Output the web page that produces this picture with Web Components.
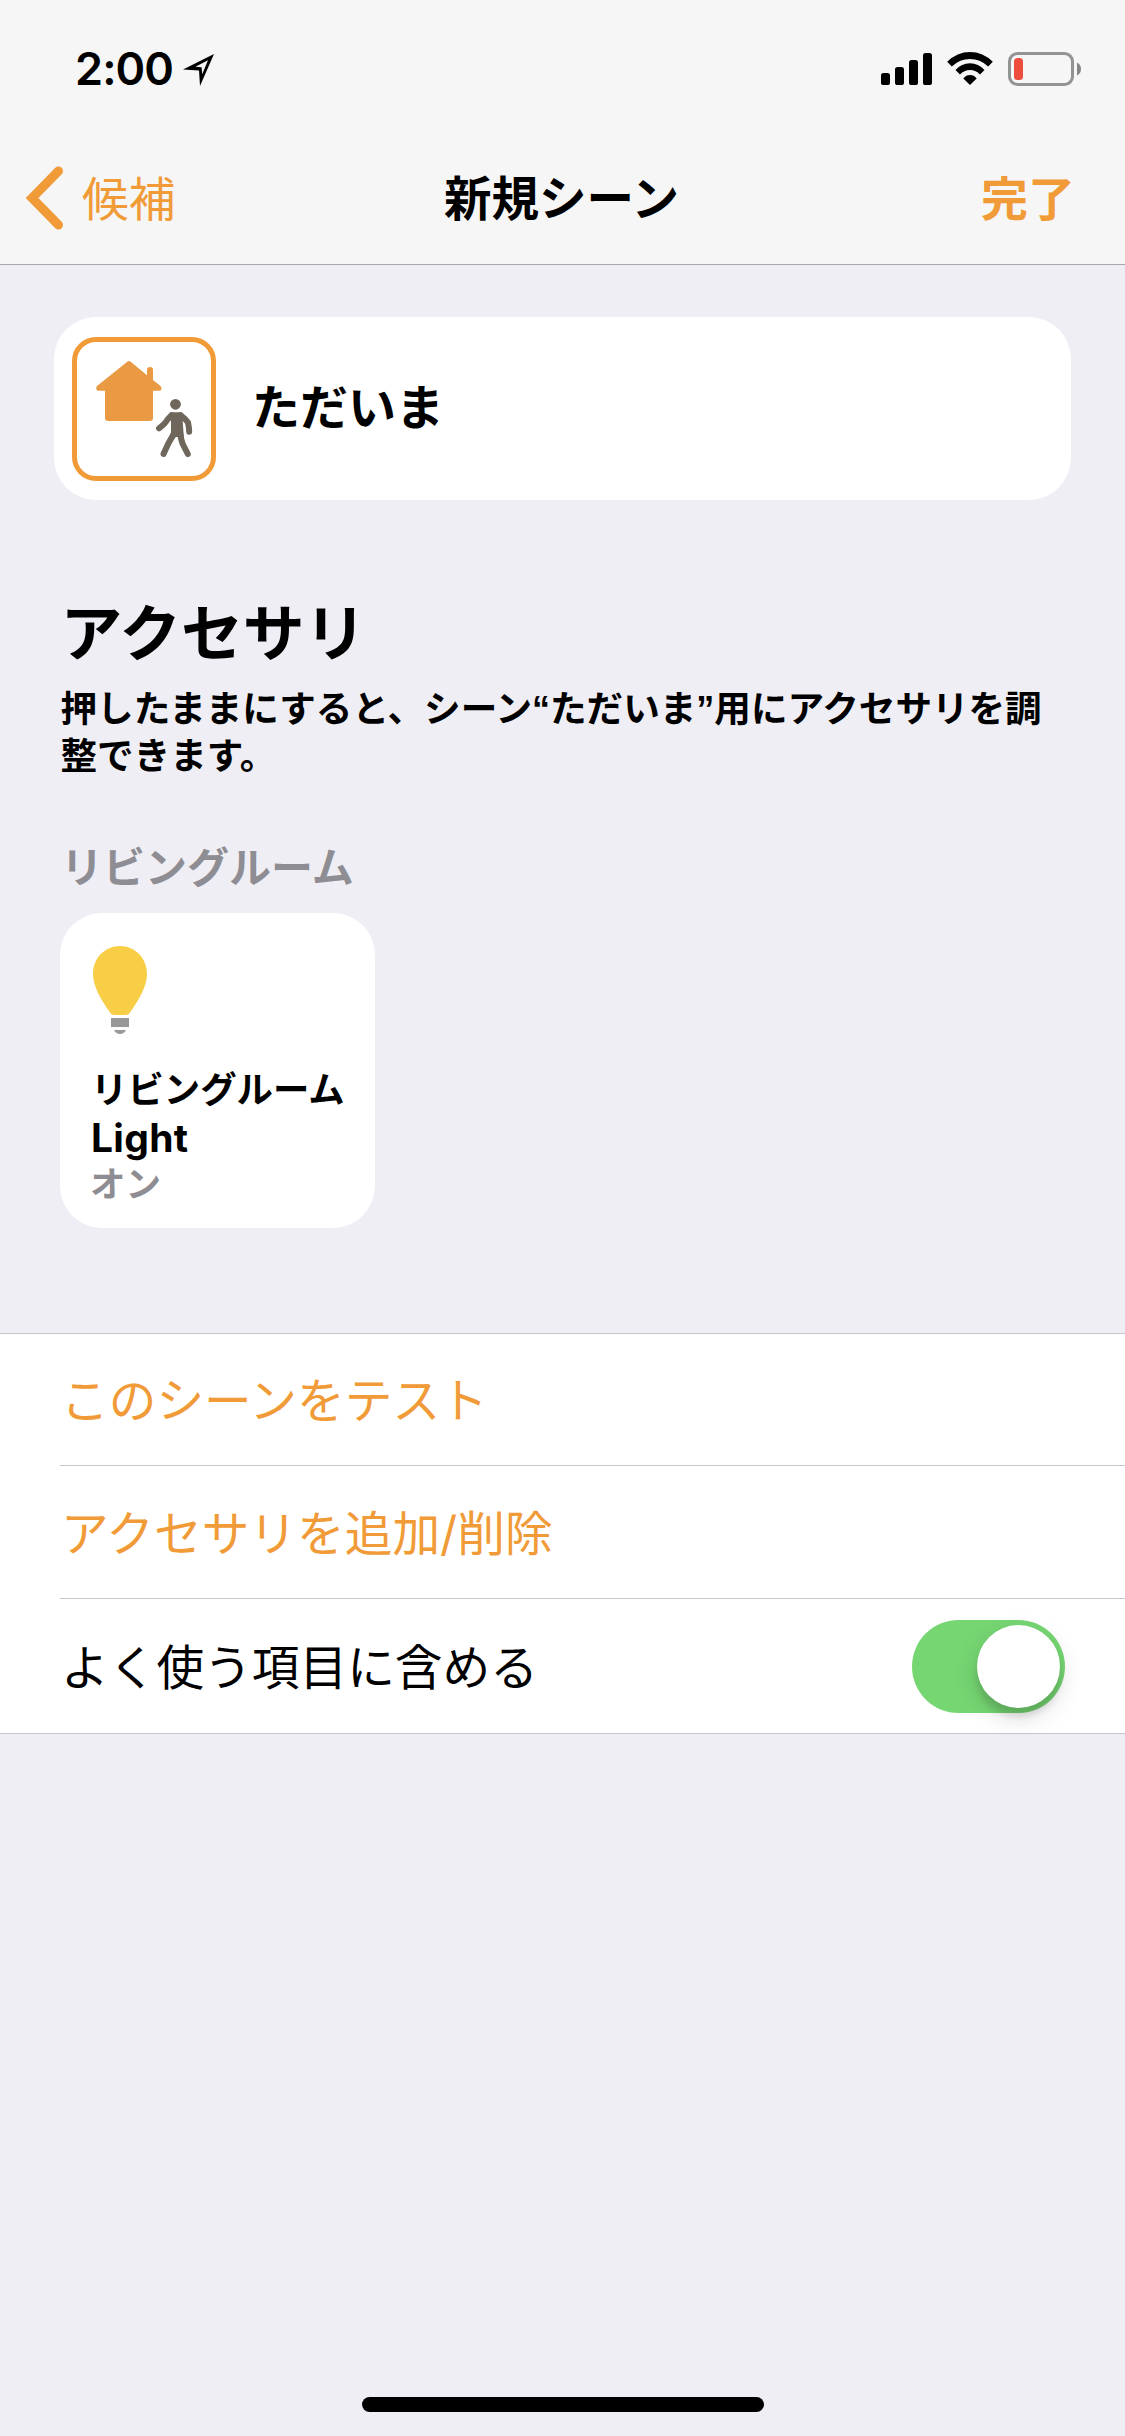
<!DOCTYPE html>
<html lang="ja">
<head>
<meta charset="utf-8">
<title>新規シーン</title>
<style>
  html, body { margin: 0; padding: 0; background: #efeef4; }
  body { width: 1125px; height: 2436px; overflow: hidden; font-family: Inter, "Noto Sans CJK JP", sans-serif; color: #000; }
</style>
</head>
<body>
<scene-screen></scene-screen>
<script>
const define = (name, markup) => {
  const template = document.createElement('template');
  template.innerHTML = markup;
  customElements.define(name, class extends HTMLElement {
    constructor() {
      super();
      this.attachShadow({ mode: 'open' }).append(template.content.cloneNode(true));
    }
  });
};

define('status-bar', `
<style>
  :host { display: flex; justify-content: space-between; align-items: center; height: 132px; padding: 6px 44px 0 75px; box-sizing: border-box; }
  .left, .right { display: flex; align-items: center; }
  .time { font-size: 45px; font-weight: 600; line-height: 54px; letter-spacing: -0.9px; width: 108px; white-space: nowrap; }
  svg { display: block; }
</style>
<div class="left">
  <span class="time">2:00</span>
  <svg width="32" height="34" viewBox="0 0 32 34"><path fill-rule="evenodd" d="M31 2 L17 34 L16 18.6 L0 17.5 Z M25 8.2 L12.5 14.8 L18.6 15.2 L19.2 22.2 Z"/></svg>
</div>
<div class="right">
  <svg width="200" height="36" viewBox="881 51 200 36">
    <rect x="881" y="73" width="9" height="12" rx="2.6"/><rect x="895" y="67" width="9" height="18" rx="2.6"/>
    <rect x="909" y="60" width="9" height="25" rx="2.6"/><rect x="923" y="53" width="9" height="32" rx="2.6"/>
    <path d="M947.2 61.8 Q957 52 970 52 Q983 52 992.8 61.8 L988.2 66.4 Q980 59 970 59 Q960 59 951.8 66.4 Z"/>
    <path d="M955.5 70 Q961.5 63.2 970 63.2 Q978.5 63.2 984.5 70 L980 74.6 Q976 70.1 970 70.1 Q964 70.1 960 74.6 Z"/>
    <path d="M963.3 78.4 Q966 75 970 75 Q974 75 976.7 78.4 L970 85 Z"/>
    <rect x="1009.5" y="53.5" width="63" height="31" rx="8" fill="none" stroke="#939393" stroke-width="3"/>
    <rect x="1014" y="58" width="9" height="22" rx="3.5" fill="#ec4d3d"/>
    <path d="M1077 62.5 Q1081 64.5 1081 69 Q1081 73.5 1077 75.5 Z" fill="#858585"/>
  </svg>
</div>`);

define('nav-bar', `
<style>
  :host { display: grid; grid-template-columns: 1fr auto 1fr; align-items: center; height: 133px; padding: 0 50px 0 48px; box-sizing: border-box; border-bottom: 1px solid #a8a8ac; font-size: 47.5px; line-height: 60px; }
  .back { display: flex; align-items: center; gap: 16px; margin-left: -24px; color: #f19b38; font-size: 46.7px; }
  .back span, .title, .done { padding-top: 2px; }
  .title, .done { font-weight: 600; }
  .done { justify-self: end; color: #f19b38; font-size: 47px; }
  svg { display: block; }
</style>
<div class="back">
  <svg width="42" height="66" viewBox="0 0 42 66"><path d="M34.5 6 L8 33 L34.5 60" fill="none" stroke="#f19b38" stroke-width="9" stroke-linecap="round" stroke-linejoin="miter"/></svg>
  <span><slot name="back"></slot></span>
</div>
<div class="title"><slot name="title"></slot></div>
<div class="done"><slot name="done"></slot></div>`);

define('scene-card', `
<style>
  :host { display: flex; align-items: center; gap: 36px; height: 183px; margin: 0 54px; padding-left: 18px; box-sizing: border-box; background: #fff; border-radius: 42px; font-size: 48px; font-weight: 600; line-height: 60px; }
  .icon { width: 144px; height: 144px; box-sizing: border-box; border: 5px solid #f19b38; border-radius: 24px; }
  .name { padding-bottom: 2px; }
  svg { display: block; margin: -5px; }
</style>
<div class="icon">
  <svg width="144" height="144" viewBox="0 0 144 144">
    <path fill="#e99a42" d="M55 25 Q57 23.2 59 25 L75 38.3 V32.5 Q75 30 78 30 Q81 30 81 32.5 V43 L88.8 49.3 Q91 53.7 87 53.7 H81 V81 Q81 84 78 84 H36 Q33 84 33 81 V53.7 H27 Q23 53.7 24.7 49.3 Z"/>
    <g fill="none" stroke="#6f675b" stroke-width="6" stroke-linecap="round" stroke-linejoin="round">
      <circle cx="103.5" cy="67.3" r="5.4" fill="#6f675b" stroke="none"/>
      <path d="M99.5 78.2 L95.5 82.5 Q93.5 86.5 87 91.3"/>
      <path d="M108.5 78.2 Q113.5 82 116 85.5 Q117 90 117.2 94.7"/>
      <path fill="#6f675b" stroke="none" d="M99.5 75.2 H108 Q111 75.2 113 79 L110.7 84 L112 103 L106 100 H104 L97 104 L99 95 V84 L96 80 Q97 76 99.5 75.2 Z"/>
      <path d="M101.5 97.5 Q96 106 91.5 117"/>
      <path d="M108.3 97 Q109.3 104 111 107.5 L115.8 117"/>
    </g>
  </svg>
</div>
<span class="name"><slot></slot></span>`);

define('section-header', `
<style>
  :host { display: block; padding-left: 60.5px; white-space: nowrap; }
  .heading { font-size: 61.8px; font-weight: 600; line-height: 76px; }
  .note { font-size: 36.6px; font-weight: 600; line-height: 46.5px; margin-top: 14px; }
</style>
<div class="heading"><slot name="heading"></slot></div>
<div class="note"><slot name="note"></slot></div>`);

define('room-label', `
<style>:host { display: block; padding-left: 61px; color: #8e8d93; font-size: 42px; font-weight: 600; line-height: 52px; }</style>
<slot></slot>`);

define('accessory-tile', `
<style>
  :host { display: flex; flex-direction: column; width: 315px; height: 315px; margin-left: 60px; padding: 33px 0 0 31px; box-sizing: border-box; background: #fff; border-radius: 42px; white-space: nowrap; }
  svg { display: block; margin-left: 2px; }
  .name { font-size: 36.4px; font-weight: 600; line-height: 48px; margin-top: 30px; }
  .kind { font-size: 39px; font-weight: 700; line-height: 47px; letter-spacing: 0.3px; }
  .state { font-size: 35.5px; font-weight: 600; line-height: 47px; color: #8e8d93; margin-left: -1px; }
</style>
<svg width="54" height="90" viewBox="0 0 54 90">
  <path fill="#f7ce46" d="M27 0 C42 0 54 12 54 28 C54 42 43 58 37 66.5 Q35.5 69 33 69 H21 Q18.5 69 17 66.5 C11 58 0 42 0 28 C0 12 12 0 27 0 Z"/>
  <rect x="18" y="72" width="18" height="9" fill="#999"/>
  <path d="M21 84 H33 Q31 88 27 88 Q23 88 21 84 Z" fill="#999"/>
</svg>
<div class="name"><slot name="name"></slot></div>
<div class="kind"><slot name="kind"></slot></div>
<div class="state"><slot name="state"></slot></div>`);

define('list-group', `
<style>:host { display: block; background: #fff; border-top: 1px solid #c8c7cc; border-bottom: 1px solid #c8c7cc; }</style>
<slot></slot>`);

define('list-row', `
<style>
  :host { display: flex; align-items: center; justify-content: space-between; height: 132px; margin-left: 60px; padding: 0 60px 0 1px; box-sizing: border-box; border-bottom: 1px solid #c8c7cc; font-size: 47.7px; line-height: 60px; }
  :host([action]) { color: #f19b38; height: 133px; }
  :host([action]:first-child) { height: 132px; }
  :host([last]) { border-bottom: 0; height: 134px; padding-top: 1px; }
  .label { padding-top: 3px; }
</style>
<span class="label"><slot></slot></span><slot name="control"></slot>`);

define('toggle-switch', `
<style>
  :host { display: flex; justify-content: flex-end; width: 153px; height: 93px; padding: 5px; box-sizing: border-box; border-radius: 47px; background: #76d672; }
  .knob { width: 83px; height: 83px; border-radius: 50%; background: #fff; box-shadow: 0 9px 24px rgba(0,0,0,.15), 0 9px 6px rgba(0,0,0,.1); }
</style>
<div class="knob"></div>`);

define('scene-screen', `
<style>
  :host { display: flex; flex-direction: column; width: 1125px; height: 2436px; background: #efeef4; }
  header { background: #f6f6f6; }
  scene-card { margin-top: 52px; }
  section-header { margin-top: 96px; }
  .quote { font-family: "Liberation Sans", sans-serif; font-size: 36px; line-height: 0; }
  room-label { margin-top: 63px; }
  accessory-tile { margin-top: 19px; }
  list-group { margin-top: 105px; }
  .home { width: 402px; height: 15px; border-radius: 8px; background: #000; margin: auto auto 24px 362px; }
</style>
<header>
  <status-bar></status-bar>
  <nav-bar><span slot="back">候補</span><span slot="title">新規シーン</span><span slot="done">完了</span></nav-bar>
</header>
<scene-card>ただいま</scene-card>
<section-header>
  <span slot="heading">アクセサリ</span>
  <span slot="note">押したままにすると、シーン<span class="quote">“</span>ただいま<span class="quote">”</span>用にアクセサリを調<br>整できます。</span>
</section-header>
<room-label>リビングルーム</room-label>
<accessory-tile><span slot="name">リビングルーム</span><span slot="kind">Light</span><span slot="state">オン</span></accessory-tile>
<list-group>
  <list-row action>このシーンをテスト</list-row>
  <list-row action>アクセサリを追加/削除</list-row>
  <list-row last>よく使う項目に含める<toggle-switch slot="control"></toggle-switch></list-row>
</list-group>
<div class="home"></div>`);
</script>
</body>
</html>
